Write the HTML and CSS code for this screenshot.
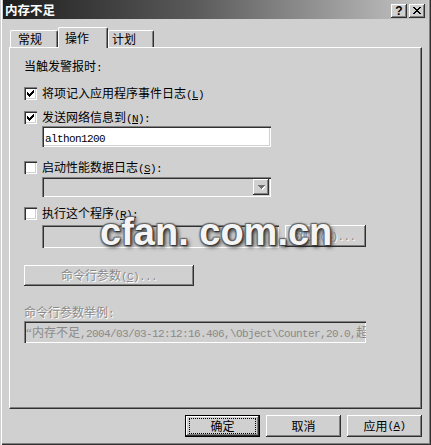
FILE: index.html
```html
<!DOCTYPE html>
<html lang="zh-CN">
<head>
<meta charset="utf-8">
<title>内存不足</title>
<link rel="stylesheet" href="styles.css">
</head>
<body>
<div class="window">
  <div class="titlebar">
    <span class="title">内存不足</span>
    <div class="cbtns">
      <span class="cbtn help">?</span>
      <span class="cbtn"><svg width="8" height="7" viewBox="0 0 8 7" shape-rendering="crispEdges"><path d="M0 0h2v1h-2zM6 0h2v1h-2zM1 1h2v1h-2zM5 1h2v1h-2zM2 2h4v1h-4zM3 3h2v1h-2zM2 4h4v1h-4zM1 5h2v1h-2zM5 5h2v1h-2zM0 6h2v1h-2zM6 6h2v1h-2z" fill="#000"/></svg></span>
    </div>
  </div>
  <div class="tabs">
    <div class="tab t1">常规</div>
    <div class="tab active">操作</div>
    <div class="tab t3">计划</div>
  </div>
  <div class="panel">
    <div class="heading">当触发警报时<span class="m">:</span></div>
    <div class="row r1">
      <span class="chk"><svg width="7" height="7" viewBox="0 0 7 7" shape-rendering="crispEdges"><path d="M0 2h1v3h-1zM1 3h1v3h-1zM2 4h1v3h-1zM3 3h1v3h-1zM4 2h1v3h-1zM5 1h1v3h-1zM6 0h1v3h-1z" fill="#000"/></svg></span>
      <span class="lbl">将项记入应用程序事件日志<span class="m">(<u>L</u>)</span></span>
    </div>
    <div class="row r2">
      <span class="chk"><svg width="7" height="7" viewBox="0 0 7 7" shape-rendering="crispEdges"><path d="M0 2h1v3h-1zM1 3h1v3h-1zM2 4h1v3h-1zM3 3h1v3h-1zM4 2h1v3h-1zM5 1h1v3h-1zM6 0h1v3h-1z" fill="#000"/></svg></span>
      <span class="lbl">发送网络信息到<span class="m">(<u>N</u>):</span></span>
    </div>
    <div class="field f1"><span class="m">althon1200</span></div>
    <div class="row r3">
      <span class="chk"></span>
      <span class="lbl">启动性能数据日志<span class="m">(<u>S</u>):</span></span>
    </div>
    <div class="combo">
      <span class="dropbtn"><svg width="7" height="5" viewBox="0 0 7 5" shape-rendering="crispEdges"><path d="M1 1h7v1h-1v1h-1v1h-1v1h-1v-1h-1v-1h-1v-1h-1z" fill="#fff"/><path d="M0 0h7v1h-1v1h-1v1h-1v1h-1v-1h-1v-1h-1v-1h-1z" fill="#707070"/></svg></span>
    </div>
    <div class="row r4">
      <span class="chk"></span>
      <span class="lbl">执行这个程序<span class="m">(<u>R</u>):</span></span>
    </div>
    <div class="prog">
      <div class="field f2"></div>
      <div class="btn browse"><span class="dis">浏览<span class="m">(<u>B</u>)...</span></span></div>
    </div>
    <div class="btn cmd"><span class="dis">命令行参数<span class="m">(<u>C</u>)...</span></span></div>
    <div class="example-label dis">命令行参数举例<span class="m">:</span></div>
    <div class="field f3"><span class="q">“</span>内存不足<span class="m">,2004/03/03-12:12:16.406,\Object\Counter,20.0,</span>超过</div>
  </div>
  <div class="actions">
    <div class="btn action default"><span class="focus">确定</span></div>
    <div class="btn action">取消</div>
    <div class="btn action">应用<span class="m">(<u>A</u>)</span></div>
  </div>
</div>
<div class="watermark">cfan. com.cn</div>
</body>
</html>
```
FILE: styles.css
```css
* { box-sizing: border-box; }
html, body { margin: 0; padding: 0; }
body {
  width: 431px;
  height: 445px;
  overflow: hidden;
  background: #d0d0d0;
  font-family: "Noto Sans CJK SC", sans-serif;
  font-size: 12px;
  color: #000;
  position: relative;
}
.m {
  font-family: "Liberation Mono", monospace;
  font-size: 11px;
  letter-spacing: -0.6px;
}
u { text-decoration: underline; text-underline-offset: 1px; }

.window {
  width: 431px;
  height: 445px;
  background: #d0d0d0;
  padding: 0 3px;
  display: flex;
  flex-direction: column;
  box-shadow: inset 1px 0 #d0d0d0, inset 2px 0 #fff, inset -1px -1px #303030, inset -2px -2px #808080;
}

.titlebar {
  height: 19px;
  flex: none;
  display: flex;
  align-items: flex-start;
  background: linear-gradient(to right, #1e1e1e 0%, #5a5a5a 45%, #c6c6c6 100%);
}
.title {
  flex: 1;
  color: #fff;
  font-weight: bold;
  font-size: 12.5px;
  line-height: 19px;
  padding-left: 2px;
}
.cbtns {
  display: flex;
  gap: 2px;
  margin: 4px 3px 0 0;
}
.cbtn {
  width: 16px;
  height: 14px;
  background: #d0d0d0;
  box-shadow: inset -1px -1px #303030, inset 1px 1px #fff, inset -2px -2px #808080;
  display: flex;
  align-items: center;
  justify-content: center;
  padding-bottom: 1px;
}
.cbtn.help {
  font-family: "Liberation Sans", sans-serif;
  font-weight: bold;
  font-size: 12px;
  line-height: 12px;
}

.tabs {
  margin-top: 8px;
  height: 20px;
  flex: none;
  display: flex;
  align-items: flex-end;
  padding-left: 7px;
}
.tab {
  height: 17px;
  border-top: 1px solid #fff;
  border-left: 1px solid #fff;
  border-right: 1px solid #303030;
  box-shadow: inset -1px 0 #808080;
  border-radius: 2px 2px 0 0;
  line-height: 15px;
  background: #d0d0d0;
}
.t1 { width: 48px; padding-left: 7px; }
.tab.active {
  width: 50px;
  height: 21px;
  margin-bottom: -1px;
  line-height: 19px;
  padding-left: 6px;
  position: relative;
  z-index: 1;
}
.t3 { width: 46px; padding-left: 3px; }

.panel {
  margin-left: 6px;
  width: 413px;
  height: 362px;
  flex: none;
  border-top: 1px solid #fff;
  border-left: 1px solid #fff;
  border-right: 1px solid #303030;
  border-bottom: 1px solid #303030;
  box-shadow: inset -1px -1px #808080;
  padding-left: 14px;
  display: flex;
  flex-direction: column;
  align-items: flex-start;
}
.heading { margin-top: 10px; line-height: 16px; height: 16px; }

.row {
  display: flex;
  align-items: center;
  height: 13px;
  gap: 5px;
}
.r1 { margin-top: 13px; }
.r2 { margin-top: 11px; }
.r3 { margin-top: 14px; }
.r4 { margin-top: 10px; }
.lbl { line-height: 13px; white-space: nowrap; }
.chk {
  width: 13px;
  height: 13px;
  flex: none;
  background: #fff;
  box-shadow: inset 1px 1px #808080, inset 2px 2px #303030, inset -1px -1px #fff, inset -2px -2px #d0d0d0;
  display: flex;
  align-items: center;
  justify-content: center;
}

.field {
  background: #fff;
  box-shadow: inset 1px 1px #808080, inset 2px 2px #303030, inset -1px -1px #fff, inset -2px -2px #d0d0d0;
  white-space: nowrap;
  overflow: hidden;
}
.f1 {
  margin-top: 2px;
  margin-left: 18px;
  width: 229px;
  height: 21px;
  padding-left: 3px;
  line-height: 21px;
}
.combo {
  margin-top: 3px;
  margin-left: 18px;
  width: 229px;
  height: 20px;
  padding: 2px;
  background: #d0d0d0;
  box-shadow: inset 1px 1px #808080, inset 2px 2px #303030, inset -1px -1px #fff, inset -2px -2px #d0d0d0;
  display: flex;
  justify-content: flex-end;
}
.dropbtn {
  width: 16px;
  height: 16px;
  background: #d0d0d0;
  box-shadow: inset -1px -1px #303030, inset 1px 1px #fff, inset -2px -2px #808080;
  display: flex;
  align-items: center;
  justify-content: center;
}

.prog {
  margin-top: 5px;
  margin-left: 18px;
  display: flex;
  gap: 6px;
  align-items: flex-start;
}
.f2 { width: 237px; height: 23px; background: #d0d0d0; }
.btn {
  background: #d0d0d0;
  box-shadow: inset -1px -1px #303030, inset 1px 1px #fff, inset -2px -2px #808080;
  display: flex;
  align-items: center;
  justify-content: center;
  white-space: nowrap;
  line-height: 14px;
}
.browse { width: 81px; height: 22px; }
.cmd { margin-top: 17px; width: 170px; height: 21px; }
.dis { color: #8a8a8a; text-shadow: 1px 1px 0 #fff; }
.example-label { margin-top: 18px; line-height: 16px; height: 16px; }
.f3 {
  margin-top: 1px;
  width: 342px;
  height: 22px;
  background: #d0d0d0;
  color: #8a8a8a;
  padding-left: 2px;
  line-height: 22px;
}
.q {
  display: inline-block;
  width: 6px;
  font-family: "Liberation Serif", serif;
  font-size: 13px;
}

.actions {
  margin-top: 6px;
  height: 22px;
  flex: none;
  display: flex;
  justify-content: flex-end;
  gap: 6px;
  padding-right: 6px;
}
.action { width: 75px; height: 22px; }
.default {
  padding: 3px 4px;
  box-shadow: inset 0 0 0 1px #000, inset -2px -2px #303030, inset 2px 2px #fff, inset -3px -3px #808080;
  align-items: stretch;
}
.focus {
  flex: 1;
  border: 1px dotted #000;
  display: flex;
  align-items: center;
  justify-content: center;
}

.watermark {
  position: absolute;
  left: 100px;
  top: 213px;
  font-family: "Liberation Sans", sans-serif;
  font-weight: bold;
  font-size: 38px;
  line-height: 38px;
  color: #f4f4f4;
  white-space: nowrap;
  text-shadow: 1px 1px 1px #333, -1px -1px 1px #666, 1px -1px 1px #666, -1px 1px 1px #666, 2px 2px 4px #222;
}
```
